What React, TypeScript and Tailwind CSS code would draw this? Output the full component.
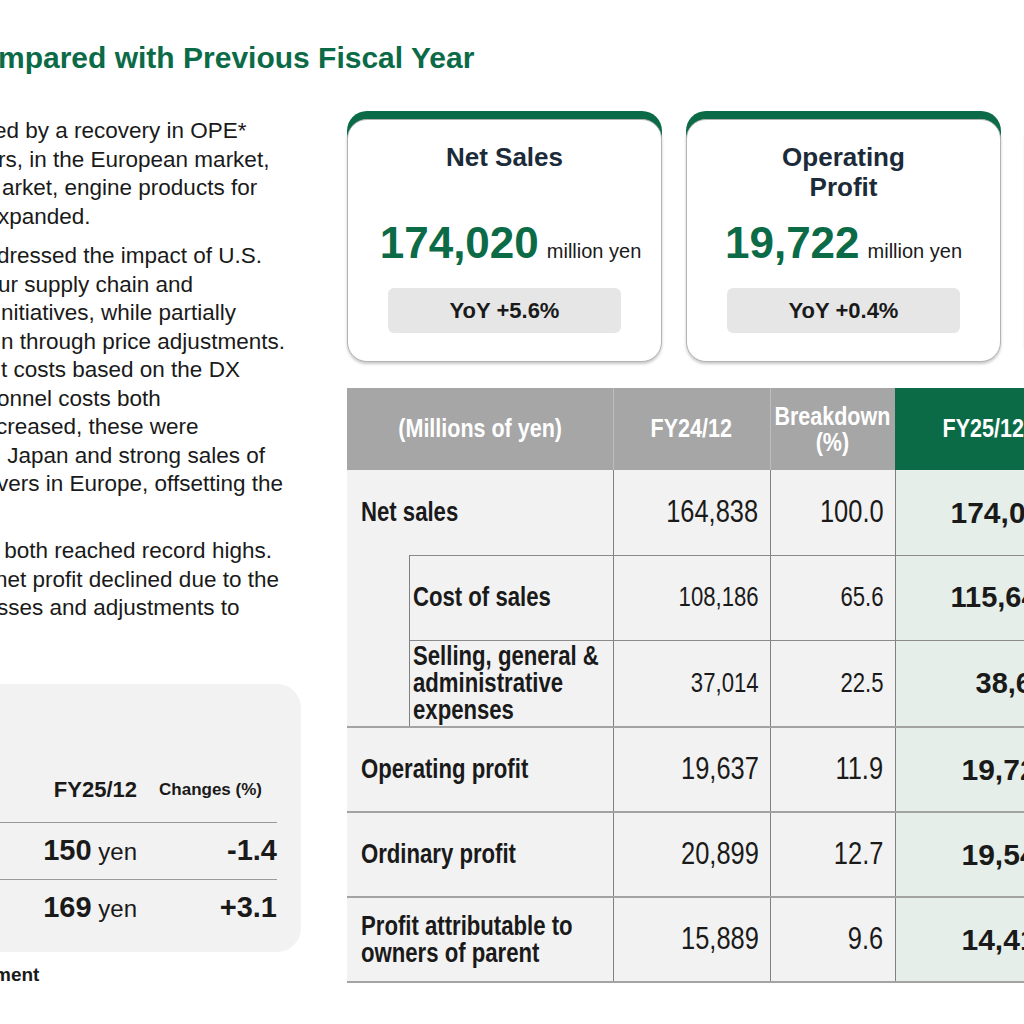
import React from "react";

const green = "#0b6b47";

const p1 = [
  { t: "ed by a recovery in OPE*", c: "-ml-[6px]" },
  { t: "rs, in the European market,", c: "-ml-[2px]" },
  { t: "arket, engine products for", c: "ml-[2px]" },
  { t: "xpanded.", c: "-ml-[2px]" },
];
const p2 = [
  { t: "dressed the impact of U.S.", c: "-ml-[3px]" },
  { t: "ur supply chain and", c: "-ml-[2px]" },
  { t: "nitiatives, while partially", c: "ml-[1px]" },
  { t: "n through price adjustments.", c: "ml-[1px]" },
  { t: "t costs based on the DX", c: "ml-[1px]" },
  { t: "onnel costs both", c: "-ml-[3px]" },
  { t: "creased, these were", c: "-ml-[4px]" },
  { t: " Japan and strong sales of", c: "ml-[1px]" },
  { t: "vers in Europe, offsetting the", c: "-ml-[3px]" },
  { t: " ", c: "" },
];
const p3 = [
  { t: " both reached record highs.", c: "-ml-[2px]" },
  { t: "net profit declined due to the", c: "-ml-[5px]" },
  { t: "sses and adjustments to", c: "-ml-[3px]" },
];

const Para = ({ lines }: { lines: { t: string; c: string }[] }) => (
  <div className="flex flex-col">
    {lines.map((l, i) => (
      <div key={i} className={`h-[28.5px] leading-[28.5px] whitespace-pre ${l.c}`}>
        {l.t}
      </div>
    ))}
  </div>
);

const Card = ({
  title,
  value,
  yoy,
  shift = "",
}: {
  title: React.ReactNode;
  value: string;
  yoy: string;
  shift?: string;
}) => (
  <div className="w-[315px] h-[243px] shrink-0 bg-white rounded-[20px] border-[1.5px] border-[#b3b3b3] shadow-[0_-8px_0_0_#0b6b47,0_2px_3px_rgba(0,0,0,0.22)] flex flex-col items-center pt-[22px]">
    <div className="h-[60px] text-[26px] leading-[30px] font-bold text-[#1c2b39] text-center">
      {title}
    </div>
    <div className={`mt-[17px] flex items-baseline gap-[8px] h-[48px] ${shift}`}>
      <span className="text-[44px] leading-[48px] font-bold text-[#0b6b47]">{value}</span>
      <span className="text-[20px] text-[#1a1a1a]">million yen</span>
    </div>
    <div className="mt-[21px] w-[233px] h-[45px] rounded-[6px] bg-[#e6e6e6] flex items-center justify-center text-[22px] font-bold text-[#1a1a1a]">
      {yoy}
    </div>
  </div>
);

// the table is set in a narrow face; squeeze Liberation Sans to Arial Narrow widths
const NarrowL = ({ children }: { children: React.ReactNode }) => (
  <span className="inline-block whitespace-nowrap scale-x-[0.82] origin-left">{children}</span>
);
const NarrowR = ({ children }: { children: React.ReactNode }) => (
  <span className="inline-block whitespace-nowrap scale-x-[0.82] origin-right">{children}</span>
);
const HeadText = ({ children }: { children: React.ReactNode }) => (
  <div className="flex justify-center">
    <span className="shrink-0 whitespace-nowrap scale-x-[0.86] origin-center">{children}</span>
  </div>
);

type Row = {
  label: string[];
  v1: string;
  v2: string;
  v3: string;
  sub?: boolean;
  v3Pad: string;
};

const rows: Row[] = [
  { label: ["Net sales"], v1: "164,838", v2: "100.0", v3: "174,020", v3Pad: "pl-[55px]" },
  { label: ["Cost of sales"], v1: "108,186", v2: "65.6", v3: "115,648", sub: true, v3Pad: "pl-[55px]" },
  {
    label: ["Selling, general &", "administrative", "expenses"],
    v1: "37,014",
    v2: "22.5",
    v3: "38,650",
    sub: true,
    v3Pad: "pl-[80px]",
  },
  { label: ["Operating profit"], v1: "19,637", v2: "11.9", v3: "19,722", v3Pad: "pl-[66px]" },
  { label: ["Ordinary profit"], v1: "20,899", v2: "12.7", v3: "19,548", v3Pad: "pl-[66px]" },
  {
    label: ["Profit attributable to", "owners of parent"],
    v1: "15,889",
    v2: "9.6",
    v3: "14,412",
    v3Pad: "pl-[66px]",
  },
];

const Label = ({ lines }: { lines: string[] }) => (
  <NarrowL>
    {lines.map((l, i) => (
      <span key={i} className="block">
        {l}
      </span>
    ))}
  </NarrowL>
);

const ResultsTable = () => (
  <table className="mt-[26px] w-[724px] table-fixed border-collapse text-[#1a1a1a]">
    <colgroup>
      <col className="w-[62px]" />
      <col className="w-[204px]" />
      <col className="w-[157px]" />
      <col className="w-[125px]" />
      <col className="w-[176px]" />
    </colgroup>
    <thead>
      <tr className="h-[82px] text-white font-bold text-[25px]">
        <th colSpan={2} className="bg-[#a6a6a6] border-r border-[#bdbdbd] font-bold">
          <HeadText>(Millions of yen)</HeadText>
        </th>
        <th className="bg-[#a6a6a6] border-r border-[#bdbdbd] font-bold">
          <HeadText>FY24/12</HeadText>
        </th>
        <th className="bg-[#a6a6a6] font-bold leading-[26px]">
          <HeadText>
            <span className="block">Breakdown</span>
            <span className="block">(%)</span>
          </HeadText>
        </th>
        <th className="bg-[#0b6b47] font-bold">
          <HeadText>FY25/12</HeadText>
        </th>
      </tr>
    </thead>
    <tbody>
      {rows.map((r, i) => {
        const main = !r.sub;
        const topLine =
          i === 0
            ? ""
            : main
              ? "border-t-2 border-t-[#a3a3a3]"
              : "border-t border-t-[#8a8a8a]";
        const h = i === 2 ? "h-[87px]" : "h-[85px]";
        const vSize = main ? "text-[31px]" : "text-[27px]";
        const v3Size = main ? "text-[30px]" : "text-[29px]";
        return (
          <tr key={i} className={`${h} bg-[#f2f2f2]`}>
            {main ? (
              <td
                colSpan={2}
                className={`${topLine} border-r border-r-[#808080] pl-[14px] text-[27px] leading-[27px] font-bold`}
              >
                <Label lines={r.label} />
              </td>
            ) : (
              <>
                {i === 1 && <td rowSpan={2} className="border-r border-r-[#808080]" />}
                <td
                  className={`${topLine} border-r border-r-[#808080] pl-[3px] text-[27px] leading-[27px] font-bold`}
                >
                  <Label lines={r.label} />
                </td>
              </>
            )}
            <td className={`${topLine} border-r border-r-[#808080] pr-[11px] text-right ${vSize}`}>
              <NarrowR>{r.v1}</NarrowR>
            </td>
            <td className={`${topLine} border-r border-r-[#808080] pr-[11px] text-right ${vSize}`}>
              <NarrowR>{r.v2}</NarrowR>
            </td>
            <td
              className={`${topLine} bg-[#e5eee9] ${r.v3Pad} text-left whitespace-nowrap font-bold ${v3Size}`}
            >
              {r.v3}
            </td>
          </tr>
        );
      })}
      <tr>
        <td colSpan={5} className="border-t-2 border-t-[#a3a3a3] h-0 p-0" />
      </tr>
    </tbody>
  </table>
);

export default function App() {
  return (
    <div className="w-[1024px] h-[1024px] overflow-hidden bg-white font-['Liberation_Sans',Arial,sans-serif] text-[#1a1a1a]">
      <h1 className="pt-[40px] -ml-[2px] text-[30px] leading-[36px] font-bold whitespace-nowrap" style={{ color: green }}>
        mpared with Previous Fiscal Year
      </h1>

      <div className="mt-[35px] flex">
        {/* left: summary text and per-share box */}
        <div className="w-[347px] shrink-0 pt-[6px] text-[22.5px]">
          <Para lines={p1} />
          <div className="mt-[11px]">
            <Para lines={p2} />
          </div>
          <div className="mt-[10px]">
            <Para lines={p3} />
          </div>

          <div className="mt-[61px] -ml-[40px] w-[341px] pl-[40px] pr-[24px] pt-[86px] pb-[16px] rounded-[24px] bg-[#f2f2f2]">
            <div className="grid grid-cols-[137px_140px] h-[40px] items-center">
              <div className="text-right text-[22px] font-bold">FY25/12</div>
              <div className="text-right pr-[15px] text-[17px] font-bold">Changes (%)</div>
            </div>
            <div className="mt-[12px] border-t-[1.5px] border-[#9a9a9a] grid grid-cols-[137px_140px] h-[57px] items-center">
              <div className="text-right">
                <span className="text-[29px] font-bold">150</span>
                <span className="text-[24px]"> yen</span>
              </div>
              <div className="text-right text-[29px] font-bold">-1.4</div>
            </div>
            <div className="border-t-[1.5px] border-[#9a9a9a] grid grid-cols-[137px_140px] h-[57px] items-center">
              <div className="text-right">
                <span className="text-[29px] font-bold">169</span>
                <span className="text-[24px]"> yen</span>
              </div>
              <div className="text-right text-[29px] font-bold">+3.1</div>
            </div>
          </div>
          <div className="mt-[11px] -ml-[6px] text-[19px] leading-[24px] font-bold">ment</div>
        </div>

        {/* right: headline cards and table */}
        <div className="shrink-0 pt-[8px] flex flex-col">
          <div className="flex gap-[24px]">
            <Card title="Net Sales" value="174,020" yoy="YoY +5.6%" shift="pl-[12px]" />
            <Card
              title={
                <>
                  Operating
                  <br />
                  Profit
                </>
              }
              value="19,722"
              yoy="YoY +0.4%"
            />
            <Card title="Ordinary Profit" value="19,548" yoy="YoY -6.5%" />
          </div>
          <ResultsTable />
        </div>
      </div>
    </div>
  );
}
